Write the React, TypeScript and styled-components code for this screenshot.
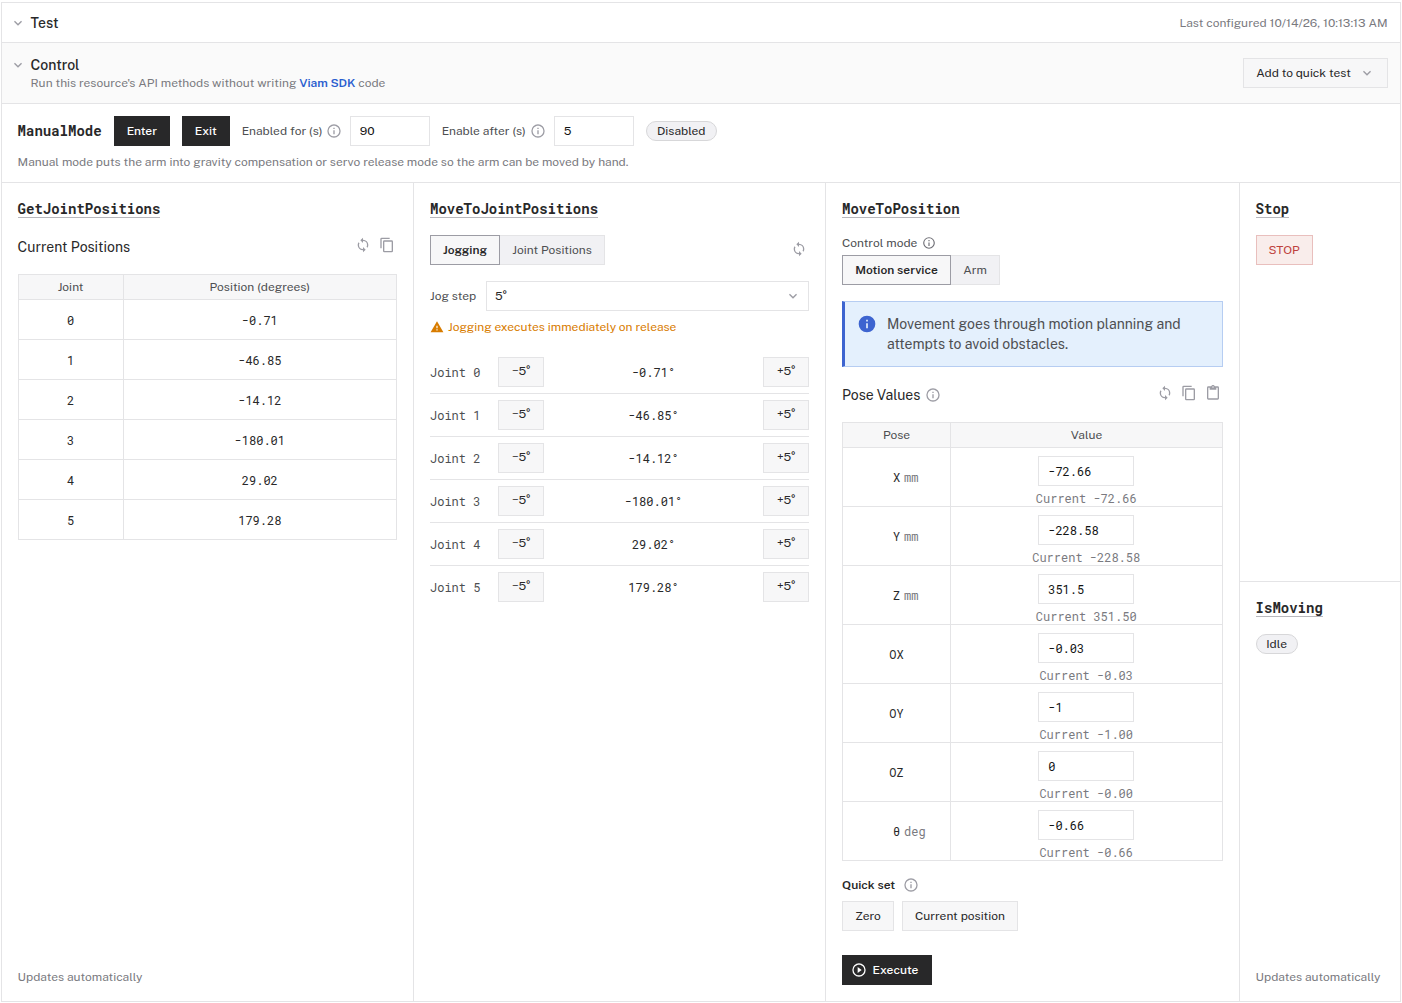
import type { ReactNode } from 'react';
import styled, { createGlobalStyle, css } from 'styled-components';

const icons = {
  chevron:
    'M7.41,8.58L12,13.17L16.59,8.58L18,10L12,16L6,10L7.41,8.58Z',
  info: 'M11,9H13V7H11M12,20C7.59,20 4,16.41 4,12C4,7.59 7.59,4 12,4C16.41,4 20,7.59 20,12C20,16.41 16.41,20 12,20M12,2A10,10 0 0,0 2,12A10,10 0 0,0 12,22A10,10 0 0,0 22,12A10,10 0 0,0 12,2M11,17H13V11H11V17Z',
  infoFilled:
    'M13,9H11V7H13M13,17H11V11H13M12,2A10,10 0 0,0 2,12A10,10 0 0,0 12,22A10,10 0 0,0 22,12A10,10 0 0,0 12,2Z',
  sync: 'M12,18A6,6 0 0,1 6,12C6,11 6.25,10.03 6.7,9.2L5.24,7.74C4.46,8.97 4,10.43 4,12A8,8 0 0,0 12,20V23L16,19L12,15M12,4V1L8,5L12,9V6A6,6 0 0,1 18,12C18,13 17.75,13.97 17.3,14.8L18.76,16.26C19.54,15.03 20,13.57 20,12A8,8 0 0,0 12,4Z',
  copy: 'M19,21H8V7H19M19,5H8A2,2 0 0,0 6,7V21A2,2 0 0,0 8,23H19A2,2 0 0,0 21,21V7A2,2 0 0,0 19,5M16,1H4A2,2 0 0,0 2,3V17H4V3H16V1Z',
  clipboard:
    'M19,20H5V4H7V7H17V4H19M12,2A1,1 0 0,1 13,3A1,1 0 0,1 12,4A1,1 0 0,1 11,3A1,1 0 0,1 12,2M19,2H14.82C14.4,0.84 13.3,0 12,0C10.7,0 9.6,0.84 9.18,2H5A2,2 0 0,0 3,4V20A2,2 0 0,0 5,22H19A2,2 0 0,0 21,20V4A2,2 0 0,0 19,2Z',
  alert: 'M13,14H11V10H13M13,18H11V16H13M1,21H23L12,2L1,21Z',
  play: 'M12,20C7.59,20 4,16.41 4,12C4,7.59 7.59,4 12,4C16.41,4 20,7.59 20,12C20,16.41 16.41,20 12,20M12,2A10,10 0 0,0 2,12A10,10 0 0,0 12,22A10,10 0 0,0 22,12A10,10 0 0,0 12,2M10,16.5L16,12L10,7.5V16.5Z',
};

interface IconProps {
  name: keyof typeof icons;
  size?: number;
  color?: string;
}

const Icon = ({ name, size = 16, color = '#9c9ca4' }: IconProps) => (
  <S.Icon width={size} height={size} viewBox="0 0 24 24">
    <path d={icons[name]} fill={color} />
  </S.Icon>
);

const joints = ['-0.71', '-46.85', '-14.12', '-180.01', '29.02', '179.28'];

const poses = [
  { label: 'X', unit: 'mm', value: '-72.66', current: '-72.66' },
  { label: 'Y', unit: 'mm', value: '-228.58', current: '-228.58' },
  { label: 'Z', unit: 'mm', value: '351.5', current: '351.50' },
  { label: 'OX', value: '-0.03', current: '-0.03' },
  { label: 'OY', value: '-1', current: '-1.00' },
  { label: 'OZ', value: '0', current: '-0.00' },
  { label: 'θ', unit: 'deg', value: '-0.66', current: '-0.66' },
];

const Method = ({ children }: { children: ReactNode }) => (
  <div>
    <S.Method>{children}</S.Method>
  </div>
);

const JogButton = ({ step }: { step: string }) => (
  <S.Button $width={46}>
    <S.Step $raised>
      {step}
      <S.Ring>˚</S.Ring>
    </S.Step>
  </S.Button>
);

const JointTable = () => (
  <S.Table>
    <thead>
      <tr>
        <S.Th width={105}>Joint</S.Th>
        <S.Th>Position (degrees)</S.Th>
      </tr>
    </thead>
    <tbody>
      {joints.map((position, joint) => (
        <tr key={joint}>
          <S.Td height={40}>{joint}</S.Td>
          <S.Td height={40}>{position}</S.Td>
        </tr>
      ))}
    </tbody>
  </S.Table>
);

const PoseTable = () => (
  <S.Table>
    <thead>
      <tr>
        <S.Th width={108}>Pose</S.Th>
        <S.Th>Value</S.Th>
      </tr>
    </thead>
    <tbody>
      {poses.map(({ label, unit, value, current }) => (
        <tr key={label}>
          <S.Td height={59}>
            <S.Pose>
              {label}
              {unit && <S.Unit>{unit}</S.Unit>}
            </S.Pose>
          </S.Td>
          <S.Td height={59}>
            <S.PoseValue>
              <S.Input $width={96} $mono defaultValue={value} />
              <S.Current>Current {current}</S.Current>
            </S.PoseValue>
          </S.Td>
        </tr>
      ))}
    </tbody>
  </S.Table>
);

const App = () => {
  return (
    <>
      <GlobalStyle />
      <S.Card>
        <S.Header>
          <Icon name="chevron" />
          <S.Title>Test</S.Title>
          <S.Configured>Last configured 10/14/26, 10:13:13 AM</S.Configured>
        </S.Header>

        <S.Control>
          <S.ControlChevron>
            <Icon name="chevron" />
          </S.ControlChevron>
          <S.ControlText>
            <S.Title>Control</S.Title>
            <S.Description>
              Run this resource's API methods without writing{' '}
              <S.Link href="#">Viam SDK</S.Link> code
            </S.Description>
          </S.ControlText>
          <S.Button $width={145}>
            <S.QuickTest>Add to quick test</S.QuickTest>
            <Icon name="chevron" />
          </S.Button>
        </S.Control>

        <S.Manual>
          <S.ManualRow>
            <S.ManualTitle>ManualMode</S.ManualTitle>
            <S.Button $width={56} $variant="dark">
              Enter
            </S.Button>
            <S.Button $width={48} $variant="dark">
              Exit
            </S.Button>
            <S.Field $width={188}>
              <S.Label>Enabled for (s)</S.Label>
              <Icon name="info" />
              <S.Input $width={80} defaultValue="90" />
            </S.Field>
            <S.Field $width={192}>
              <S.Label>Enable after (s)</S.Label>
              <Icon name="info" />
              <S.Input $width={80} defaultValue="5" />
            </S.Field>
            <S.Badge $width={71}>Disabled</S.Badge>
          </S.ManualRow>
          <S.ManualHelp>
            Manual mode puts the arm into gravity compensation or servo release
            mode so the arm can be moved by hand.
          </S.ManualHelp>
        </S.Manual>

        <S.Columns>
          <S.Column $inset={15.6}>
            <Method>GetJointPositions</Method>
            <S.TableHeader>
              <S.Subtitle>Current Positions</S.Subtitle>
              <S.Actions>
                <Icon name="sync" />
                <Icon name="copy" />
              </S.Actions>
            </S.TableHeader>
            <JointTable />
            <S.Updates>Updates automatically</S.Updates>
          </S.Column>

          <S.Column>
            <Method>MoveToJointPositions</Method>
            <S.ToggleRow>
              <S.Toggle>
                <S.Option $width={70} $active>
                  Jogging
                </S.Option>
                <S.Option $width={105}>Joint Positions</S.Option>
              </S.Toggle>
              <S.Actions>
                <Icon name="sync" />
              </S.Actions>
            </S.ToggleRow>
            <S.JogStep>
              <S.Label>Jog step</S.Label>
              <S.Select>
                <S.Step>
                  5<S.Ring>˚</S.Ring>
                </S.Step>
                <Icon name="chevron" />
              </S.Select>
            </S.JogStep>
            <S.Warning>
              <Icon name="alert" size={14} color="#d87c00" />
              Jogging executes immediately on release
            </S.Warning>
            <S.JogList>
              {joints.map((position, joint) => (
                <S.JogRow key={joint}>
                  <S.JogLabel>Joint {joint}</S.JogLabel>
                  <JogButton step="−5" />
                  <S.JogValue>{position}°</S.JogValue>
                  <JogButton step="+5" />
                </S.JogRow>
              ))}
            </S.JogList>
          </S.Column>

          <S.Column>
            <Method>MoveToPosition</Method>
            <S.ControlMode>
              <S.Label>Control mode</S.Label>
              <Icon name="info" size={14} color="#6c6c73" />
            </S.ControlMode>
            <S.Toggle>
              <S.Option $width={109} $active>
                Motion service
              </S.Option>
              <S.Option $width={49}>Arm</S.Option>
            </S.Toggle>
            <S.Banner>
              <Icon name="infoFilled" size={20} color="#3d64d0" />
              <S.BannerText>
                Movement goes through motion planning and
                <br />
                attempts to avoid obstacles.
              </S.BannerText>
            </S.Banner>
            <S.PoseHeader>
              <S.Subtitle>Pose Values</S.Subtitle>
              <Icon name="info" />
              <S.Actions>
                <Icon name="sync" />
                <Icon name="copy" />
                <Icon name="clipboard" />
              </S.Actions>
            </S.PoseHeader>
            <PoseTable />
            <S.QuickSet>
              Quick set
              <Icon name="info" />
            </S.QuickSet>
            <S.QuickButtons>
              <S.Button $width={52}>Zero</S.Button>
              <S.Button $width={116}>Current position</S.Button>
            </S.QuickButtons>
            <S.Button $width={90} $variant="dark">
              <Icon name="play" color="#ffffff" />
              <S.Execute>Execute</S.Execute>
            </S.Button>
          </S.Column>

          <S.SideColumn>
            <S.StopPanel>
              <Method>Stop</Method>
              <S.StopRow>
                <S.Button $width={57} $variant="danger">
                  STOP
                </S.Button>
              </S.StopRow>
            </S.StopPanel>
            <S.MovingPanel>
              <Method>IsMoving</Method>
              <S.IdleRow>
                <S.Badge $width={42}>Idle</S.Badge>
              </S.IdleRow>
              <S.Updates>Updates automatically</S.Updates>
            </S.MovingPanel>
          </S.SideColumn>
        </S.Columns>
      </S.Card>
    </>
  );
};

const sans = "'Public Sans', Inter, 'Liberation Sans', sans-serif";
const mono = "'Roboto Mono', 'DejaVu Sans Mono', monospace";

const GlobalStyle = createGlobalStyle`
  * {
    box-sizing: border-box;
  }
  body {
    margin: 0;
    background: #fff;
    color: #282829;
    font-family: ${sans};
    font-size: 12px;
    line-height: 16px;
  }
`;

const variants = {
  light: css`
    color: #282829;
    background: #f7f7f8;
    border-color: #e4e4e6;
  `,
  dark: css`
    color: #fff;
    background: #282829;
    border-color: #282829;
    font-weight: 500;
  `,
  danger: css`
    color: #be423e;
    background: #f9edeb;
    border-color: #e9bfbd;
  `,
};

const S = {
  Icon: styled.svg`
    display: block;
    flex: none;
  `,

  Card: styled.div`
    display: flex;
    flex-direction: column;
    width: 1400px;
    height: 1000px;
    margin: 2px 0 0 1px;
    border: 1px solid #e4e4e6;
  `,

  Header: styled.div`
    display: flex;
    align-items: center;
    height: 40px;
    padding: 0 12.4px 0 8px;
    border-bottom: 1px solid #e4e4e6;
  `,
  Title: styled.div`
    margin-left: 4.6px;
    font-size: 14px;
    font-weight: 500;
    line-height: 20px;
  `,
  Configured: styled.div`
    margin-left: auto;
    color: #7a7a80;
  `,

  Control: styled.div`
    display: flex;
    align-items: center;
    height: 61px;
    padding: 0 12px 0 8px;
    background: #fafafa;
    border-bottom: 1px solid #e4e4e6;
  `,
  ControlChevron: styled.div`
    align-self: flex-start;
    margin-top: 14px;
  `,
  ControlText: styled.div`
    flex: 1;
  `,
  Description: styled.div`
    margin-left: 4.6px;
    color: #7a7a80;
  `,
  Link: styled.a`
    color: #2a5ecf;
    font-weight: 600;
    letter-spacing: -0.05px;
    text-decoration: none;
  `,
  QuickTest: styled.span`
    margin-right: 8px;
  `,

  Button: styled.button<{
    $width: number;
    $variant?: keyof typeof variants;
  }>`
    display: flex;
    align-items: center;
    justify-content: center;
    flex: none;
    width: ${({ $width }) => $width}px;
    height: 30px;
    padding: 0;
    border: 1px solid;
    font: inherit;
    white-space: nowrap;
    ${({ $variant = 'light' }) => variants[$variant]}
  `,
  Execute: styled.span`
    margin: 0 5px 0 6px;
  `,

  Manual: styled.div`
    height: 79px;
    padding: 12px 16px 0 15.6px;
    border-bottom: 1px solid #e4e4e6;
  `,
  ManualRow: styled.div`
    display: flex;
    align-items: center;
    gap: 12px;
  `,
  ManualTitle: styled.div`
    width: 84.2px;
    font-family: ${mono};
    font-size: 14px;
    font-weight: 700;
    white-space: nowrap;
  `,
  ManualHelp: styled.div`
    margin-top: 8px;
    color: #7a7a80;
    white-space: nowrap;
  `,
  Field: styled.div<{ $width: number }>`
    display: flex;
    align-items: center;
    width: ${({ $width }) => $width}px;

    svg {
      margin: 0 8px 0 auto;
    }
  `,
  Label: styled.label`
    color: #4e4f52;
    white-space: nowrap;
  `,
  Input: styled.input<{ $width: number; $mono?: boolean }>`
    display: block;
    width: ${({ $width }) => $width}px;
    height: 30px;
    padding: 0 9px;
    color: #131414;
    background: #fff;
    border: 1px solid #e4e4e6;
    border-radius: 0;
    outline: none;
    font-family: ${({ $mono }) => ($mono ? mono : sans)};
    font-size: 12px;
  `,
  Badge: styled.span<{ $width: number }>`
    display: flex;
    align-items: center;
    justify-content: center;
    width: ${({ $width }) => $width}px;
    height: 20px;
    background: #f1f1f4;
    border: 1px solid #d7d7d9;
    border-radius: 10px;
  `,

  Columns: styled.div`
    display: grid;
    grid-template-columns: 412px 412px 414px 1fr;
    flex: 1;
  `,
  Column: styled.div<{ $inset?: number }>`
    display: flex;
    flex-direction: column;
    padding: 16px;
    padding-left: ${({ $inset = 16 }) => $inset}px;
    border-right: 1px solid #e4e4e6;
  `,
  SideColumn: styled.div`
    display: flex;
    flex-direction: column;
  `,
  StopPanel: styled.div`
    height: 399px;
    padding: 16px 16px 16px 15.6px;
    border-bottom: 1px solid #e4e4e6;
  `,
  MovingPanel: styled.div`
    display: flex;
    flex: 1;
    flex-direction: column;
    padding: 16px 16px 16px 15.6px;
  `,
  Method: styled.h3`
    display: inline-block;
    height: 19px;
    margin: 0;
    border-bottom: 1px solid #b8b8bd;
    font-family: ${mono};
    font-size: 14px;
    font-weight: 700;
    line-height: 20px;
    vertical-align: top;
  `,
  Updates: styled.div`
    margin-top: auto;
    color: #7a7a80;
    white-space: nowrap;
  `,
  StopRow: styled.div`
    margin-top: 17px;
  `,
  IdleRow: styled.div`
    margin-top: 17px;
  `,

  TableHeader: styled.div`
    display: flex;
    align-items: center;
    height: 24px;
    margin: 17px 0 15px;
  `,
  Subtitle: styled.div`
    font-size: 14px;
    line-height: 20px;
  `,
  Actions: styled.div`
    display: flex;
    gap: 8px;
    margin: -4px 2px 0 auto;
  `,
  Table: styled.table`
    width: 100%;
    table-layout: fixed;
    border-spacing: 0;
    border-top: 1px solid #e4e4e6;
    border-left: 1px solid #e4e4e6;
  `,
  Th: styled.th<{ width?: number }>`
    width: ${({ width }) => (width ? `${width}px` : 'auto')};
    height: 25px;
    padding: 0;
    color: #4e4f52;
    background: #f7f7f8;
    border-right: 1px solid #e4e4e6;
    border-bottom: 1px solid #e4e4e6;
    font-weight: 400;
  `,
  Td: styled.td<{ height: number }>`
    height: ${({ height }) => height}px;
    padding: 0;
    border-right: 1px solid #e4e4e6;
    border-bottom: 1px solid #e4e4e6;
    font-family: ${mono};
    text-align: center;
  `,
  Pose: styled.span`
    position: relative;
  `,
  Unit: styled.span`
    position: absolute;
    left: 100%;
    margin-left: 4px;
    color: #7a7a80;
  `,
  PoseValue: styled.div`
    display: flex;
    flex-direction: column;
    align-items: center;
    height: 58px;
    padding: 8px 0.6px 0 0;
  `,
  Current: styled.div`
    margin-top: 4px;
    color: #7a7a80;
    white-space: nowrap;
  `,

  ToggleRow: styled.div`
    display: flex;
    align-items: center;
    margin-top: 17px;

    > :last-child {
      margin-top: -2px;
    }
  `,
  Toggle: styled.div`
    display: flex;
  `,
  Option: styled.button<{ $width: number; $active?: boolean }>`
    width: ${({ $width }) => $width}px;
    height: 30px;
    padding: 0;
    color: ${({ $active }) => ($active ? '#282829' : '#4e4f52')};
    background: ${({ $active }) => ($active ? '#f7f7f8' : '#f1f1f4')};
    border: 1px solid ${({ $active }) => ($active ? '#9c9ca4' : '#e4e4e6')};
    border-left-width: ${({ $active }) => ($active ? 1 : 0)}px;
    font: inherit;
    font-weight: ${({ $active }) => ($active ? 600 : 400)};
    white-space: nowrap;
  `,
  JogStep: styled.div`
    display: flex;
    align-items: center;
    justify-content: space-between;
    margin-top: 16px;
  `,
  Select: styled.div`
    display: flex;
    align-items: center;
    justify-content: space-between;
    width: 323px;
    height: 30px;
    padding: 0 7px 0 8px;
    border: 1px solid #e4e4e6;
  `,
  Step: styled.span<{ $raised?: boolean }>`
    height: 16px;
    margin-bottom: ${({ $raised }) => ($raised ? 2 : 0)}px;
    line-height: 16px;
  `,
  Ring: styled.span`
    font-family: Inter, sans-serif;
    font-size: 13px;
    line-height: 0;
    vertical-align: -1px;
  `,
  Warning: styled.div`
    display: flex;
    align-items: center;
    gap: 4px;
    margin-top: 8px;
    color: #d87c00;
    white-space: nowrap;
  `,
  JogList: styled.div`
    margin-top: 16px;
  `,
  JogRow: styled.div`
    display: flex;
    align-items: center;
    height: 43px;
    border-bottom: 1px solid #e4e4e6;

    &:last-child {
      border-color: transparent;
    }
  `,
  JogLabel: styled.div`
    width: 68px;
    color: #4e4f52;
    font-family: ${mono};
  `,
  JogValue: styled.div`
    flex: 1;
    font-family: ${mono};
    text-align: center;
  `,

  ControlMode: styled.div`
    display: flex;
    align-items: center;
    gap: 5px;
    margin: 17px 0 4px;
  `,
  Banner: styled.div`
    display: flex;
    height: 66px;
    margin-top: 16px;
    padding: 12px;
    background: #e4f0fd;
    border: 1px solid #b6cdf2;
    border-left: 3px solid #3d64d0;
  `,
  BannerText: styled.div`
    margin-left: 10px;
    color: #4e4f52;
    font-size: 14px;
    line-height: 20px;
    white-space: nowrap;
  `,
  PoseHeader: styled.div`
    display: flex;
    align-items: center;
    gap: 5px;
    height: 24px;
    margin: 16px 0 15px;
  `,
  QuickSet: styled.div`
    display: flex;
    align-items: center;
    gap: 8px;
    margin-top: 16px;
    font-weight: 600;
  `,
  QuickButtons: styled.div`
    display: flex;
    gap: 8px;
    margin: 8px 0 24px;
  `,
};

export default App;
